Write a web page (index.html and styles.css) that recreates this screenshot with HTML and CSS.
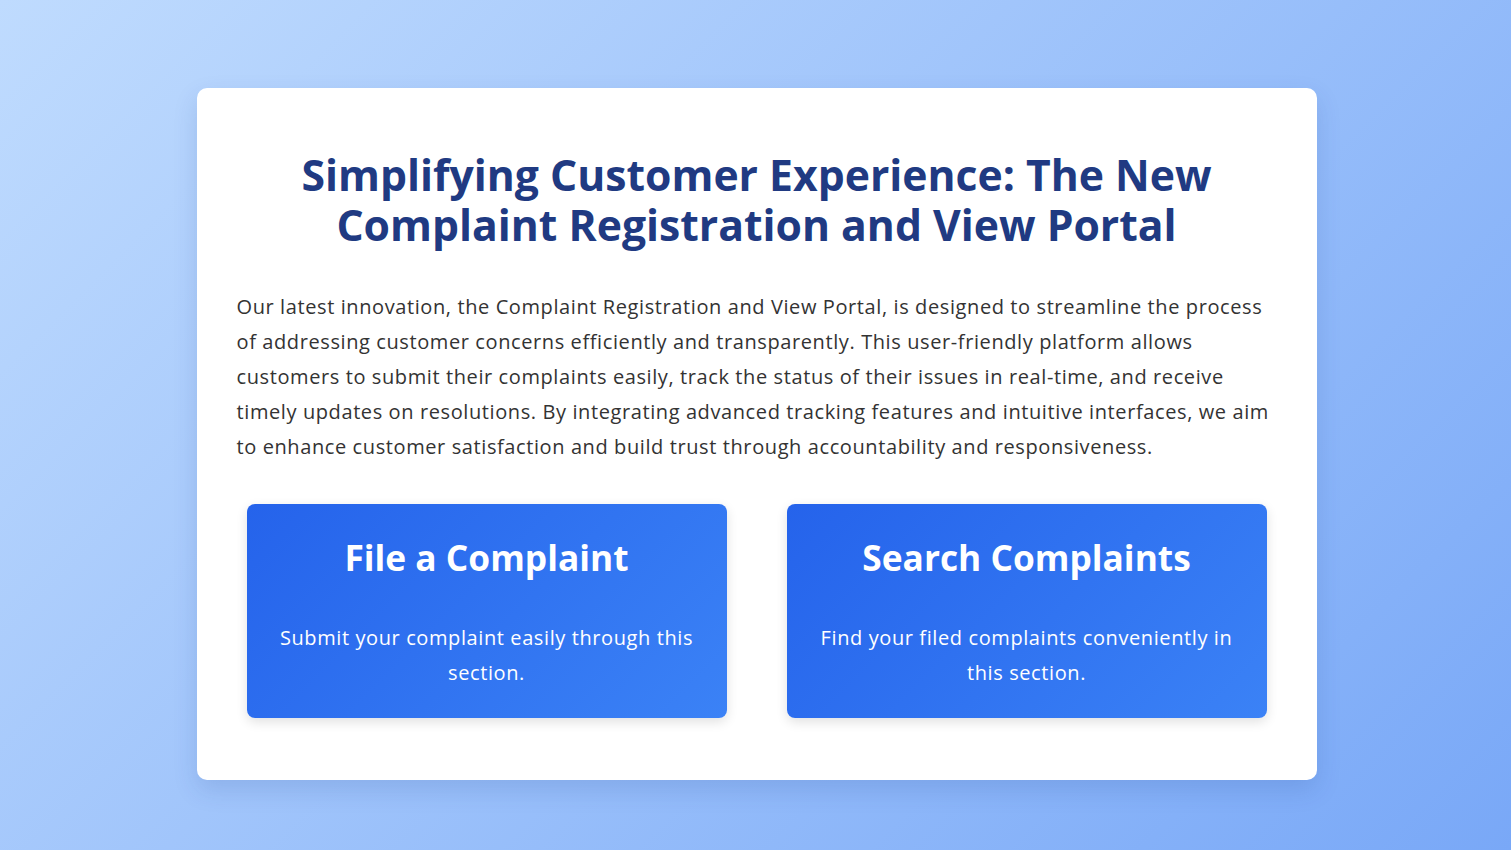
FILE: index.html
```html
<!DOCTYPE html>
<html lang="en">
<head>
<meta charset="utf-8">
<title>Complaint Portal</title>
<link rel="stylesheet" href="styles.css">
</head>
<body>
<main class="container">
  <h1 class="title">Simplifying Customer Experience: The New Complaint Registration and View Portal</h1>
  <p class="intro">Our latest innovation, the Complaint Registration and View Portal, is designed to streamline the process of addressing customer concerns efficiently and transparently. This user-friendly platform allows customers to submit their complaints easily, track the status of their issues in real-time, and receive timely updates on resolutions. By integrating advanced tracking features and intuitive interfaces, we aim to enhance customer satisfaction and build trust through accountability and responsiveness.</p>
  <div class="cards">
    <a class="card" href="#">
      <h2 class="card-title">File a Complaint</h2>
      <p class="card-text">Submit your complaint easily through this section.</p>
    </a>
    <a class="card" href="#">
      <h2 class="card-title">Search Complaints</h2>
      <p class="card-text">Find your filed complaints conveniently in this section.</p>
    </a>
  </div>
</main>
</body>
</html>
```

FILE: styles.css
```css
* { box-sizing: border-box; }
html, body { height: 100%; }
body {
  margin: 0;
  font-family: "Open Sans", "Noto Sans", sans-serif;
  background: linear-gradient(135deg, #bfdbfe 0%, #79a8f7 100%);
  padding: 88px 0 0 2px;
}
.container {
  width: 1120px;
  margin: 0 auto;
  background: #ffffff;
  border-radius: 10px;
  padding: 40px 40px 52px;
  box-shadow: 0 10px 25px rgba(30, 58, 138, 0.15);
}
.title {
  margin: 22px 0 0;
  font-size: 42.7px;
  line-height: 50px;
  font-weight: 700;
  color: #203a82;
  text-align: center;
}
.intro {
  margin: 39px 0 0;
  font-size: 20px;
  line-height: 35px;
  letter-spacing: 0.6px;
  color: #333333;
}
.cards {
  display: grid;
  grid-template-columns: 1fr 1fr;
  gap: 40px;
  margin-top: 30px;
}
.card {
  margin: 10px;
  display: block;
  text-decoration: none;
  background: linear-gradient(135deg, #2563eb 0%, #3b82f6 100%);
  border-radius: 8px;
  padding: 28px 30px;
  color: #ffffff;
  text-align: center;
  box-shadow: 0 4px 12px rgba(0, 0, 0, 0.12);
}
.card-title {
  margin: 4px 0 0;
  font-size: 35.3px;
  line-height: 43px;
  font-weight: 700;
}
.card-text {
  margin: 41px 0 0;
  font-size: 20px;
  line-height: 35px;
  letter-spacing: 0.6px;
}
```
